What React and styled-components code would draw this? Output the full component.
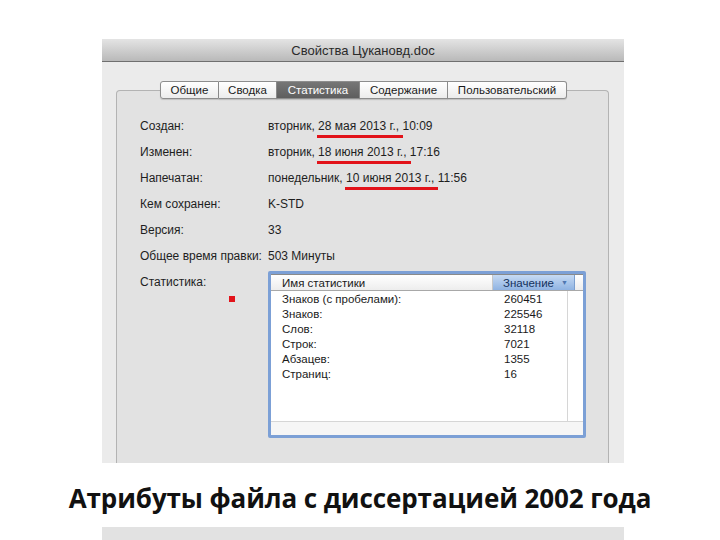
import React from 'react';
import styled, { createGlobalStyle } from 'styled-components';

const Global = createGlobalStyle`
  html, body { margin: 0; padding: 0; background: #fff; }
  body { font-family: "Liberation Sans", Arial, sans-serif; }
`;

const Page = styled.div`
  width: 720px;
  height: 540px;
  display: flex;
  flex-direction: column;
  padding-top: 39px;
  box-sizing: border-box;
  overflow: hidden;
`;

const Window = styled.div`
  margin-left: 102px;
  width: 522px;
  height: 424px;
  background: #ebebeb;
  display: flex;
  flex-direction: column;
  overflow: hidden;
`;

const TitleBar = styled.div`
  height: 22px;
  flex: none;
  background: linear-gradient(#e4e4e4, #b9b9b9);
  border-bottom: 1px solid #6f6f6f;
  display: flex;
  align-items: center;
  justify-content: center;
  font-size: 13px;
  color: #2a2a2a;
`;

const Body = styled.div`
  flex: 1;
  padding: 19px 15px 0 14px;
  display: flex;
  flex-direction: column;
`;

const TabBar = styled.div`
  display: flex;
  justify-content: center;
  position: relative;
  z-index: 1;
  margin-bottom: -9px;
  padding-left: 2px;
`;

const Tab = styled.div`
  width: ${p => p.w}px;
  height: 16px;
  display: flex;
  align-items: center;
  justify-content: center;
  font-size: 11.5px;
  color: ${p => (p.active ? '#fff' : '#1a1a1a')};
  background: ${p => (p.active ? 'linear-gradient(#767676, #5e5e5e)' : 'linear-gradient(#ffffff, #ececec)')};
  border: 1px solid #8d8d8d;
  border-left: none;
  box-shadow: 0 1px 1px rgba(0,0,0,0.15);
  &:first-child { border-left: 1px solid #8d8d8d; border-radius: 3px 0 0 3px; }
  &:last-child { border-radius: 0 3px 3px 0; }
`;

const GroupBox = styled.div`
  flex: 1;
  border: 1px solid #b3b3b3;
  border-bottom: none;
  border-radius: 4px 4px 0 0;
  background: #e2e2e2;
  padding: 22px 0 0 23px;
  display: grid;
  grid-template-columns: 128px 318px;
  grid-auto-rows: 26px;
  align-content: start;
  position: relative;
`;

const Label = styled.div`
  font-size: 12px;
  color: #1e1e1e;
  display: flex;
  align-items: ${p => (p.top ? 'flex-start' : 'center')};
  padding-top: ${p => (p.top ? '6px' : '0')};
`;

const Value = styled.div`
  font-size: 12px;
  color: #1e1e1e;
  display: flex;
  align-items: center;
  white-space: pre;
`;

const Mark = styled.span`
  position: relative;
  &::after {
    content: '';
    position: absolute;
    left: -1px;
    right: -4px;
    bottom: -5px;
    height: 3px;
    background: #e2131a;
  }
`;

const RedDot = styled.div`
  position: absolute;
  left: 112px;
  top: 205px;
  width: 6px;
  height: 6px;
  background: #e2131a;
`;

const TableWrap = styled.div`
  grid-column: 2;
  height: 167px;
  margin-top: 2px;
  box-sizing: border-box;
  border: 3px solid #7ca0d6;
  border-radius: 2px;
  background: #fff;
  display: flex;
  flex-direction: column;
  font-size: 11.5px;
  color: #1a1a1a;
`;

const Header = styled.div`
  display: grid;
  grid-template-columns: 222px 82px 1fr;
  height: 15px;
  border-top: 1px solid #8a8a8a;
  border-bottom: 1px solid #a8a8a8;
  background: linear-gradient(#ffffff, #ededed);
`;

const HeadCell = styled.div`
  display: flex;
  align-items: center;
  justify-content: space-between;
  padding: 0 6px 0 ${p => (p.active ? '10px' : '11px')};
  background: ${p => (p.active ? 'linear-gradient(#c6daf3, #8fb3e2)' : 'transparent')};
  color: ${p => (p.active ? '#13325e' : '#1a1a1a')};
  border-right: 1px solid ${p => (p.active ? '#7b9fcf' : '#c8c8c8')};
`;

const Arrow = styled.span`
  font-size: 7px;
  color: #4f76b0;
`;

const Rows = styled.div`
  flex: 1;
  display: grid;
  grid-template-columns: 297px 1fr;
  grid-template-rows: 1fr 14px;
`;

const List = styled.div`
  padding: 0 0 0 11px;
  border-right: 1px solid #d6d6d6;
`;

const Item = styled.div`
  display: grid;
  grid-template-columns: 222px 1fr;
  height: 15px;
  align-items: center;
`;

const HScroll = styled.div`
  grid-column: 1 / 3;
  border-top: 1px solid #d6d6d6;
  background: #f6f6f6;
`;

const Caption = styled.div`
  margin-top: 17px;
  text-align: center;
  font-family: "Open Sans", "Noto Sans", sans-serif;
  font-weight: 700;
  font-size: 26px;
  letter-spacing: -0.1px;
  color: #111;
`;

const Strip = styled.div`
  margin: auto 0 0 102px;
  width: 522px;
  height: 13px;
  background: #e2e2e2;
`;

const tabs = [
  ['Общие', 57],
  ['Сводка', 57],
  ['Статистика', 82],
  ['Содержание', 87],
  ['Пользовательский', 118],
];

const stats = [
  ['Знаков (с пробелами):', '260451'],
  ['Знаков:', '225546'],
  ['Слов:', '32118'],
  ['Строк:', '7021'],
  ['Абзацев:', '1355'],
  ['Страниц:', '16'],
];

export default function App() {
  return (
    <>
      <Global />
      <Page>
        <Window>
          <TitleBar>Свойства Цукановд.doc</TitleBar>
          <Body>
            <TabBar>
              {tabs.map(([t, w]) => (
                <Tab key={t} w={w} active={t === 'Статистика'}>{t}</Tab>
              ))}
            </TabBar>
            <GroupBox>
              <Label>Создан:</Label>
              <Value>вторник, <Mark>28 мая 2013 г.,</Mark> 10:09</Value>
              <Label>Изменен:</Label>
              <Value>вторник, <Mark>18 июня 2013 г.,</Mark> 17:16</Value>
              <Label>Напечатан:</Label>
              <Value>понедельник, <Mark>10 июня 2013 г.,</Mark> 11:56</Value>
              <Label>Кем сохранен:</Label>
              <Value>K-STD</Value>
              <Label>Версия:</Label>
              <Value>33</Value>
              <Label>Общее время правки:</Label>
              <Value>503 Минуты</Value>
              <Label top>Статистика:</Label>
              <TableWrap>
                <Header>
                  <HeadCell>Имя статистики</HeadCell>
                  <HeadCell active>Значение <Arrow>▼</Arrow></HeadCell>
                  <div />
                </Header>
                <Rows>
                  <List>
                    {stats.map(([k, v]) => (
                      <Item key={k}><span>{k}</span><span>{v}</span></Item>
                    ))}
                  </List>
                  <div />
                  <HScroll />
                </Rows>
              </TableWrap>
              <RedDot />
            </GroupBox>
          </Body>
        </Window>
        <Caption>Атрибуты файла с диссертацией 2002 года</Caption>
        <Strip />
      </Page>
    </>
  );
}
